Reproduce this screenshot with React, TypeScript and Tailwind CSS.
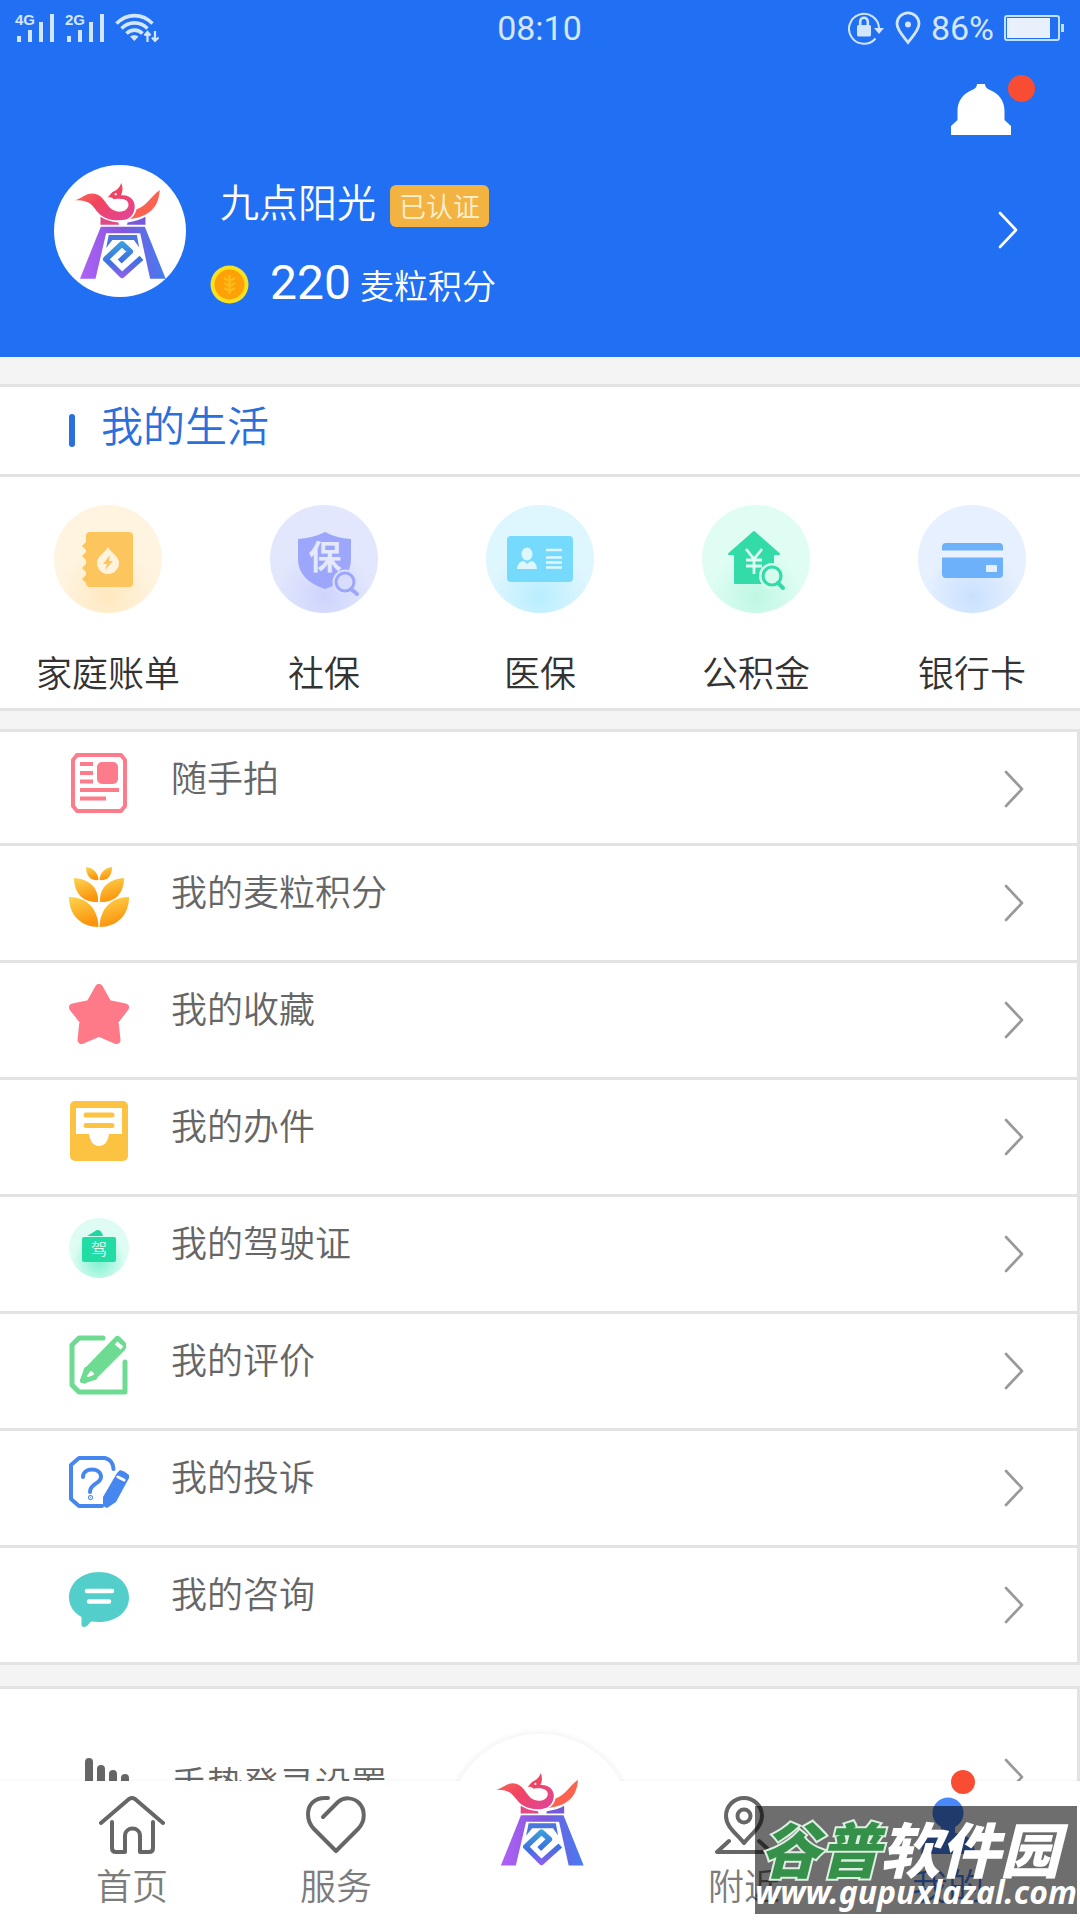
import React, { useId } from "react";

function EmblemIcon({ className }: { className: string }) {
  const id = useId();
  const fire = `${id}-fire`;
  const legs = `${id}-legs`;
  const swirl = `${id}-swirl`;
  return (
    <svg viewBox="105 95 275 290" className={className} aria-hidden="true">
      <defs>
        <linearGradient id={fire} x1="0" y1="0" x2="1" y2="1">
          <stop offset="0" stopColor="#fb7a50" />
          <stop offset="0.45" stopColor="#f14460" />
          <stop offset="1" stopColor="#e0469c" />
        </linearGradient>
        <linearGradient id={legs} gradientUnits="userSpaceOnUse" x1="120" y1="360" x2="380" y2="330">
          <stop offset="0" stopColor="#b062f6" />
          <stop offset="0.55" stopColor="#8257dc" />
          <stop offset="1" stopColor="#3f7ff2" />
        </linearGradient>
        <linearGradient id={swirl} gradientUnits="userSpaceOnUse" x1="240" y1="265" x2="250" y2="385">
          <stop offset="0" stopColor="#3aa9dc" />
          <stop offset="0.55" stopColor="#3e70e0" />
          <stop offset="1" stopColor="#9a5cf0" />
        </linearGradient>
      </defs>
      <path
        fill={`url(#${fire})`}
        d="M105 147C125 143 135 127 158 127C186 128 194 152 209 168C226 186 258 187 266 166C270 149 256 139 222 144C217 138 211 137 203 138C211 134 212 123 226 118C236 113 241 105 245 95C250 108 250 120 244 132C276 130 291 154 284 177C279 196 267 205 248 207C214 211 188 201 172 181C157 162 150 146 105 147Z"
      />
      <circle cx="228" cy="129" r="3.5" fill="#fff" />
      <path fill="#fb6350" d="M361 116C359 160 337 196 270 204C285 194 288 184 291 174C322 165 334 135 361 116Z" />
      <path fill="#e24a86" d="M182 197C198 207 214 212 236 214L238 221H182Z" />
      <path fill="#7559d8" d="M318 197C303 206 286 211 264 214L262 221H318Z" />
      <path fill={`url(#${legs})`} d="M183 227H316L379 384H332L302 247H199L167 384H120Z" />
      <path fill="#4a76dd" d="M207 252H292L299 290L283 267H218L199 291Z" />
      <path
        d="M306 321L247 374L198 325L247 279L272 302L240 332"
        fill="none"
        stroke={`url(#${swirl})`}
        strokeWidth="17"
        strokeLinejoin="round"
      />
    </svg>
  );
}

function Chevron({ className }: { className: string }) {
  return (
    <svg viewBox="0 0 20 42" className={className} fill="none" stroke="currentColor" strokeWidth="2.6" strokeLinecap="round" strokeLinejoin="round" aria-hidden="true">
      <path d="M2 4L18 21L2 38" />
    </svg>
  );
}

function Signal({ label }: { label: string }) {
  return (
    <svg viewBox="0 0 40 30" className="h-[30px] w-10 overflow-visible" fill="#d3e6ff" role="img" aria-label={`${label} signal`}>
      <text x="0" y="12" fontSize="15" fontWeight="700" fontFamily="Liberation Sans, sans-serif">{label}</text>
      <rect x="2" y="23" width="4" height="6" />
      <rect x="13" y="17" width="4" height="12" />
      <rect x="24" y="9" width="4" height="20" />
      <rect x="35" y="1" width="4" height="28" />
    </svg>
  );
}

function StatusBar() {
  return (
    <div className="grid h-14 grid-cols-[1fr_auto_1fr] items-center pr-4 pl-[15px] font-[Roboto] text-[34px] leading-none font-normal text-[#d3e6ff]">
      <div className="flex items-center gap-[10px]">
        <Signal label="4G" />
        <Signal label="2G" />
        <svg viewBox="0 0 45 30" className="h-[30px] w-[45px]" fill="none" stroke="currentColor" aria-hidden="true">
          <path d="M1.500 10.500C12 0 27 0 37.500 10.500" strokeWidth="3.600" />
          <path d="M6.500 15.500C14 8 25 8 32.500 15.500" strokeWidth="3.600" />
          <path d="M11.500 20.500C16 16 23 16 27.500 20.500" strokeWidth="3.600" />
          <path d="M15 23.500Q19 20.500 23.500 23.500L19.300 28Z" fill="currentColor" stroke="none" />
          <path d="M32.500 29V20M29.500 22.500L32.500 19L35.500 22.500M40 18V27.500M37 24.500L40 28L43.500 24.500" strokeWidth="2.200" />
        </svg>
      </div>
      <time>08:10</time>
      <div className="flex items-center justify-end gap-[10px]">
        <svg viewBox="0 0 37 34" className="h-[34px] w-[37px]" fill="none" stroke="currentColor" strokeWidth="2" aria-hidden="true">
          <path d="M27.500 27.500A15 15 0 1 1 31 17" />
          <path d="M26 17H36L31 23Z" fill="currentColor" stroke="none" />
          <rect x="9" y="14" width="14" height="11.500" rx="1.500" fill="currentColor" stroke="none" />
          <path d="M12.200 15V10.500A3.800 3.800 0 0 1 19.800 10.500V15" strokeWidth="2.600" />
        </svg>
        <svg viewBox="0 0 26 34" className="h-[34px] w-[26px]" fill="none" stroke="currentColor" strokeWidth="2.800" aria-hidden="true">
          <path d="M13 31.500C8 25 2 19 2 12.800A11 11 0 0 1 24 12.800C24 19 18 25 13 31.500Z" />
          <circle cx="13" cy="13.500" r="3" fill="currentColor" stroke="none" />
        </svg>
        <span>86%</span>
        <svg viewBox="0 0 60 26" className="h-[26px] w-[60px]" aria-hidden="true">
          <rect x="1" y="1" width="54" height="24" rx="2" fill="none" stroke="#bfe0ff" strokeWidth="2" />
          <rect x="3" y="3" width="43" height="20" fill="#e8f1fb" />
          <rect x="57" y="9" width="3" height="8" fill="#bfe0ff" />
        </svg>
      </div>
    </div>
  );
}

function Header() {
  return (
    <header className="bg-[#216ff2] pb-[49px] text-white">
      <StatusBar />
      <div className="flex justify-end pt-7 pr-[69px]">
        <button type="button" aria-label="消息" className="relative">
          <svg viewBox="0 0 60 51" className="h-[51px] w-[60px]" fill="currentColor" aria-hidden="true">
            <path d="M26 0H34C34 3 36 5 39 6C49 10 53.500 18 53.500 27V36L60 42V51H0V42L6.500 36V27C6.500 18 11 10 21 6C24 5 26 3 26 0Z" />
          </svg>
          <span className="absolute -top-[9px] -right-6 size-[27px] rounded-full bg-[#f94d33]" />
        </button>
      </div>
      <button type="button" className="mt-[30px] flex w-full items-start pr-[62px] pl-[54px] text-left">
        <span className="flex size-[132px] items-center justify-center rounded-full bg-white">
          <EmblemIcon className="h-24 w-[91px]" />
        </span>
        <span className="ml-6 flex flex-1 flex-col gap-[36px] pt-[11px]">
          <span className="flex h-12 items-center gap-[14px] pl-[10px]">
            <span className="text-[39px] leading-[48px]">九点阳光</span>
            <span className="mt-[12px] rounded-md bg-[#f3b343] px-[9px] text-[27px] leading-[42px] text-[#fff0cf]">已认证</span>
          </span>
          <span className="flex h-12 items-center">
            <svg viewBox="0 0 39 39" className="size-[39px]" aria-hidden="true">
              <circle cx="19.500" cy="19.500" r="19" fill="#fbe11c" />
              <circle cx="19.500" cy="19.500" r="15" fill="#fea108" />
              <path d="M19.500 10V29M14 13L19.500 16L25 13M14 18L19.500 21L25 18M14 23L19.500 26L25 23" fill="none" stroke="#fdbb17" strokeWidth="2.500" />
            </svg>
            <span className="ml-[21px] flex items-baseline gap-[9px]">
              <span className="font-[Roboto] text-5xl leading-[48px] font-normal">220</span>
              <span className="text-[34px] leading-[48px]">麦粒积分</span>
            </span>
          </span>
        </span>
        <Chevron className="mt-[44px] h-[42px] w-5" />
      </button>
    </header>
  );
}

function Disc({ from, to, children }: { from: string; to: string; children: React.ReactNode }) {
  const id = useId();
  return (
    <svg viewBox="0 0 108 108" className="size-[108px]" aria-hidden="true">
      <defs>
        <radialGradient id={id} cx="0.5" cy="0.85" r="0.75">
          <stop offset="0" stopColor={to} />
          <stop offset="0.6" stopColor={from} />
        </radialGradient>
      </defs>
      <circle cx="54" cy="54" r="54" fill={`url(#${id})`} />
      {children}
    </svg>
  );
}

const services = [
  {
    name: "家庭账单",
    icon: (
      <Disc from="#fff4e0" to="#fee8c0">
        <path fill="#fdc55d" d="M36 27H75Q79 27 79 31V78Q79 82 75 82H36Q32 82 32 78L28 74L32 70V67L28 63L32 59V55L28 51L32 47V45L28 41L32 37V31Q32 27 36 27Z" />
        <path fill="#fff3dc" d="M54 42C58 49 65 51 65 58A11 11 0 0 1 43 58C43 51 50 49 54 42Z" />
        <path fill="#fdc55d" d="M56 50L49 59H53L51 65L59 56H55Z" />
      </Disc>
    ),
  },
  {
    name: "社保",
    icon: (
      <Disc from="#e2e7fd" to="#ced4fc">
        <path fill="#9ca7fb" d="M55 27Q66 33 81 34V54Q81 75 55 84Q28 75 28 54V34Q43 33 55 27Z" />
        <text x="55" y="64" textAnchor="middle" fontSize="33" fontWeight="700" fill="#e5e9fe">保</text>
        <circle cx="75" cy="77" r="12.500" fill="#dbe0fd" />
        <circle cx="75" cy="77" r="9" fill="#d8dcfd" stroke="#9ca7fb" strokeWidth="3" />
        <path d="M81 84L87 89" stroke="#9ca7fb" strokeWidth="4" strokeLinecap="round" />
      </Disc>
    ),
  },
  {
    name: "医保",
    icon: (
      <Disc from="#def6fe" to="#b8eefe">
        <rect x="21" y="31" width="66" height="46" rx="4" fill="#76dafd" />
        <ellipse cx="41" cy="49" rx="5.500" ry="6.500" fill="#def6fe" />
        <path fill="#def6fe" d="M31 64Q32 56 38 56L41 59L45 56Q50 56 51 64Z" />
        <path d="M60 45H76M60 52.500H76M60 57.500H76M60 62.500H76" stroke="#def6fe" strokeWidth="2.500" />
      </Disc>
    ),
  },
  {
    name: "公积金",
    icon: (
      <Disc from="#e0fdf4" to="#bff7e3">
        <path fill="#33dba8" stroke="#33dba8" strokeWidth="2" strokeLinejoin="round" d="M52 27L77 49H71V78H33V49H27Z" />
        <path d="M44 44L52 54L60 44M44 55H60M44 61H60M52 54V69" fill="none" stroke="#e0fdf4" strokeWidth="2.800" />
        <circle cx="70" cy="71" r="13" fill="#d5fbee" />
        <circle cx="70" cy="71" r="9" fill="#d5fbee" stroke="#33dba8" strokeWidth="3.200" />
        <path d="M76 78L81 83" stroke="#33dba8" strokeWidth="4" strokeLinecap="round" />
      </Disc>
    ),
  },
  {
    name: "银行卡",
    icon: (
      <Disc from="#e7f0fe" to="#c9e1fe">
        <rect x="24" y="38" width="61" height="35" rx="4" fill="#6db1fa" />
        <path d="M24 49H85" stroke="#e9f2fe" strokeWidth="7" />
        <rect x="68" y="60" width="11" height="7" rx="1" fill="#e5effe" />
      </Disc>
    ),
  },
];

function LifeSection() {
  return (
    <section className="border-y-[3px] border-[#e3e3e3] bg-white">
      <div className="flex h-[90px] items-center gap-[26px] border-b-[3px] border-[#e3e3e3] pl-[69px]">
        <span className="h-[33px] w-[6px] rounded-full bg-[#2a6fdc]" />
        <h2 className="pb-[14px] text-[42px] leading-[56px] text-[#2a6fdc]">我的生活</h2>
      </div>
      <ul className="grid grid-cols-5 pt-7 pb-[13px]">
        {services.map((s) => (
          <li key={s.name}>
            <button type="button" className="flex w-full flex-col items-center gap-[34px]">
              {s.icon}
              <span className="text-[36px] leading-[48px] text-[#333]">{s.name}</span>
            </button>
          </li>
        ))}
      </ul>
    </section>
  );
}

function WheatIcon() {
  const id = useId();
  return (
    <svg viewBox="0 0 60 60" className="size-[60px]" aria-hidden="true">
      <defs>
        <linearGradient id={id} x1="0" y1="0" x2="0.3" y2="1">
          <stop offset="0" stopColor="#fdd54e" />
          <stop offset="1" stopColor="#fb930d" />
        </linearGradient>
      </defs>
      <g fill={`url(#${id})`}>
        <path d="M17 0C24 1 29 5 29.500 13C22 14 17 9 17 0Z" />
        <path d="M43 0C36 1 31 5 30.500 13C38 14 43 9 43 0Z" />
        <path d="M5 11C19 12 30 20 29 35C14 36 5 26 5 11Z" />
        <path d="M55 11C41 12 30 20 31 35C46 36 55 26 55 11Z" />
        <path d="M0 30C18 30 29 42 29.500 60C12 60 0 48 0 30Z" />
        <path d="M60 30C42 30 31 42 30.500 60C48 60 60 48 60 30Z" />
      </g>
    </svg>
  );
}

const rows = [
  {
    name: "随手拍",
    icon: (
      <svg viewBox="0 0 60 60" className="size-[60px]" fill="none" stroke="#fd7c8b" strokeWidth="4" aria-hidden="true">
        <path d="M8 2H52L56 7V53L52 58H8L4 53V7Z" strokeLinejoin="round" />
        <path d="M11 11H24M11 20H24M11 28.500H24M11 37H50M11 45.500H37" strokeWidth="4" />
        <rect x="28" y="9" width="21" height="22" rx="5" fill="#fd7c8b" stroke="none" />
      </svg>
    ),
  },
  { name: "我的麦粒积分", icon: <WheatIcon /> },
  {
    name: "我的收藏",
    icon: (
      <svg viewBox="0 0 60 60" className="size-[60px]" aria-hidden="true">
        <path d="M30 4L39 20L56 23.500L45.500 37L47.500 56L30 48.500L12.500 56L14.500 37L4 23.500L21 20Z" fill="#fe7a89" stroke="#fe7a89" strokeWidth="8" strokeLinejoin="round" />
      </svg>
    ),
  },
  {
    name: "我的办件",
    icon: (
      <svg viewBox="0 0 60 60" className="size-[60px]" aria-hidden="true">
        <rect x="1" y="0" width="58" height="60" rx="5" fill="#fcc343" />
        <path d="M7 7H53V33H40C39 40 36 45 30 45C24 45 21 40 20 33H7Z" fill="#fff" />
        <path d="M17 14H43M17 24.500H43" stroke="#fcc343" strokeWidth="5" strokeLinecap="round" />
      </svg>
    ),
  },
  {
    name: "我的驾驶证",
    icon: (
      <svg viewBox="0 0 60 60" className="size-[60px]" aria-hidden="true">
        <defs>
          <radialGradient id="licence-glow" cx="0.5" cy="0.72" r="0.45">
            <stop offset="0" stopColor="#7df2d0" />
            <stop offset="1" stopColor="#dffcf4" />
          </radialGradient>
        </defs>
        <circle cx="30" cy="30" r="30" fill="url(#licence-glow)" />
        <path d="M18 18L28 12Q32 11 34 18Z" fill="#1fd6a0" />
        <rect x="13" y="19" width="34" height="25" rx="2" fill="#22dca6" />
        <text x="30" y="37" textAnchor="middle" fontSize="16" fill="#e4fdf5">驾</text>
      </svg>
    ),
  },
  {
    name: "我的评价",
    icon: (
      <svg viewBox="0 0 60 60" className="size-[60px]" fill="none" stroke="#6ddc92" strokeWidth="5" strokeLinecap="round" strokeLinejoin="round" aria-hidden="true">
        <path d="M34 3H10L3 10V50L10 57H56V27" />
        <path d="M47 1Q49 0 51 2L57 8Q58 12 56 15L28 43L15 49L11 45L17 32Z" fill="#6ddc92" stroke="none" />
        <path d="M13 46L17 34L26 43Z" fill="#6ddc92" strokeWidth="4" />
        <path d="M19 41L22 37L24 39Z" fill="#fff" stroke="#fff" strokeWidth="2" />
        <path d="M47 8L53 13" stroke="#fff" strokeWidth="4" strokeLinecap="butt" />
      </svg>
    ),
  },
  {
    name: "我的投诉",
    icon: (
      <svg viewBox="0 0 60 60" className="size-[60px]" fill="none" stroke="#4687ef" strokeWidth="4" strokeLinecap="round" strokeLinejoin="round" aria-hidden="true">
        <path d="M33 54H10L2 47V13L10 6H36Q44 8 44.500 17" />
        <path d="M14 25C14 15 32 15 32 25C32 32 21 31 21 40" />
        <circle cx="21.500" cy="45.500" r="0.500" fill="#4687ef" />
        <path d="M51 18Q56 19 60 23V26L47 50L38 56L34 54V45L48 21Z" fill="#4687ef" stroke="none" />
        <path d="M49 25L55 28" stroke="#fff" strokeWidth="3" />
      </svg>
    ),
  },
  {
    name: "我的咨询",
    icon: (
      <svg viewBox="0 0 60 60" className="size-[60px]" aria-hidden="true">
        <path d="M30 3C47 3 60 14 60 28.500C60 43 47 53 30 53L22 52.500L18 57Q12 60 12.500 54V48C5 44 0 37 0 28.500C0 14 13 3 30 3Z" fill="#53ceca" />
        <path d="M18 22H43M20 32.500H40" stroke="#fff" strokeWidth="4.500" strokeLinecap="round" />
      </svg>
    ),
  },
];

function MenuList() {
  return (
    <ul className="border-t-[3px] border-r-[3px] border-[#e3e3e3] bg-white">
      {rows.map((r) => (
        <li key={r.name} className="group border-b-[3px] border-[#e3e3e3]">
          <button type="button" className="flex w-full items-start pt-[21px] pr-[53px] pb-[33px] pl-[69px] text-left group-first:pb-[30px]">
            {r.icon}
            <span className="-mt-[3px] ml-[42px] flex-1 text-[36px] leading-[52px] text-[#666]">{r.name}</span>
            <Chevron className="mt-[15px] h-[42px] w-5 text-[#999]" />
          </button>
        </li>
      ))}
    </ul>
  );
}

function SettingsList() {
  return (
    <ul className="mt-[21px] border-t-[3px] border-r-[3px] border-[#e3e3e3] bg-white">
      <li>
        <button type="button" className="flex w-full items-start pt-[67px] pr-[53px] pb-[33px] pl-[85px] text-left">
          <svg viewBox="0 0 44 60" className="h-[60px] w-11" fill="none" stroke="#666" strokeWidth="8" strokeLinecap="round" aria-hidden="true">
            <path d="M4 6V58M16 13V58M28 18V58M40 22V58" />
          </svg>
          <span className="ml-[42px] flex-1 text-[36px] leading-[52px] text-[#666]">手势登录设置</span>
          <Chevron className="h-[42px] w-5 text-[#999]" />
        </button>
      </li>
    </ul>
  );
}

function Tab({ label, active, children }: { label: string; active?: boolean; children: React.ReactNode }) {
  return (
    <a href="#" className="flex flex-col items-center gap-[5px] pt-[15px]">
      <span className="relative">{children}</span>
      <span className={active ? "text-[36px] leading-[50px] text-[#4a8af8]" : "text-[36px] leading-[50px] text-[#7c7c7c]"}>{label}</span>
    </a>
  );
}

function TabBar() {
  const line = "h-[58px] w-[66px]";
  return (
    <nav className="relative shrink-0">
      <div className="absolute -top-[47px] left-1/2 size-[184px] -translate-x-1/2 rounded-full bg-white shadow-[0_0_6px_2px_rgba(0,0,0,0.05)]" />
      <div className="relative grid h-[139px] grid-cols-5 bg-white px-[30px] shadow-[0_-1px_2px_rgba(0,0,0,0.04)]">
        <Tab label="首页">
          <svg viewBox="0 0 66 58" className={line} fill="none" stroke="#666" strokeWidth="4" strokeLinecap="round" strokeLinejoin="round" aria-hidden="true">
            <path d="M2 27L30 3Q33 1 36 3L64 27" />
            <path d="M13 26V52Q13 56 17 56H26V40C26 30 41 30 41 40V56H50Q54 56 54 52V26" />
          </svg>
        </Tab>
        <Tab label="服务">
          <svg viewBox="0 0 66 58" className={line} fill="none" stroke="#666" strokeWidth="4" strokeLinecap="round" strokeLinejoin="round" aria-hidden="true">
            <path d="M25 2H22C11 2 5 9 5 18C5 24 7 29 11 33L33 55L55 33C63 25 62 13 56 7C50 1 41 1 35 6L20 21" />
          </svg>
        </Tab>
        <a href="#" aria-label="首页服务" className="relative flex items-start justify-center">
          <span className="absolute -top-[47px] size-[184px] rounded-full bg-white" />
          <EmblemIcon className="relative -mt-[8px] h-[93px] w-[88px]" />
        </a>
        <Tab label="附近">
          <svg viewBox="0 0 66 58" className={line} fill="none" stroke="#666" strokeWidth="4" strokeLinecap="round" strokeLinejoin="round" aria-hidden="true">
            <path d="M33 47C26 38 15 31 15 20A18 18 0 0 1 51 20C51 31 40 38 33 47Z" />
            <circle cx="33" cy="20" r="6.500" />
            <path d="M18 45L6 56H60L48 45" />
          </svg>
        </Tab>
        <Tab label="我的" active>
          <svg viewBox="0 0 66 58" className={line} fill="#4a8af8" aria-hidden="true">
            <circle cx="33" cy="17" r="15.500" />
            <path d="M26 30H40V37Q59 38 60 58H6Q7 38 26 37Z" />
          </svg>
          <span className="absolute -top-[26px] left-9 size-6 rounded-full bg-[#f94d33]" />
        </Tab>
      </div>
      <div className="absolute right-[3px] bottom-[6px] flex h-[108px] w-[322px] flex-col items-center overflow-hidden bg-black/57 pt-[11px] whitespace-nowrap text-white italic">
        <span className="pr-3 text-[60px] leading-[60px] font-black">
          <span className="text-[#35914a] [-webkit-text-stroke:4px_#dfeee2] [paint-order:stroke_fill]">谷普</span>软件园
        </span>
        <span className="font-['Noto_Sans'] text-[32px] leading-[30px] font-bold">www.gupuxlazal.com</span>
      </div>
    </nav>
  );
}

export default function App() {
  return (
    <div className="flex h-dvh flex-col bg-[#f4f4f4] font-['Noto_Sans_CJK_SC',sans-serif] font-[350]">
      <main className="min-h-0 flex-1 overflow-y-auto [scrollbar-width:none]">
        <Header />
        <div className="mt-[27px] mb-[18px]">
          <LifeSection />
        </div>
        <MenuList />
        <SettingsList />
      </main>
      <TabBar />
    </div>
  );
}
